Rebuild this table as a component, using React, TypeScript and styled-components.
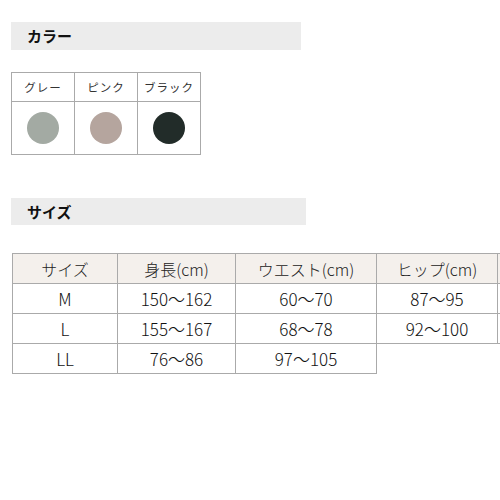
import React from "react";
import styled, { createGlobalStyle } from "styled-components";

const Global = createGlobalStyle`
  html, body { margin: 0; padding: 0; background: #fff; overflow: hidden; }
  body { font-family: "Noto Sans CJK JP", "Liberation Sans", sans-serif; color: #222; }
`;

const Page = styled.div`
  width: 500px;
  height: 500px;
  overflow: hidden;
  padding: 22px 0 0 11px;
  box-sizing: border-box;
`;

const SectionBar = styled.h2<{ $w: number }>`
  margin: 0;
  width: ${(p) => p.$w}px;
  height: 28px;
  background: #ececec;
  box-sizing: border-box;
  padding-left: 16px;
  font-size: 15px;
  font-weight: 700;
  line-height: 28px;
  color: #111;
`;

const ColorTable = styled.table`
  margin-top: 22px;
  border-collapse: collapse;
  table-layout: fixed;
`;

const ColorHead = styled.td`
  width: 62px;
  height: 28px;
  border: 1px solid #aaa;
  text-align: center;
  font-size: 11.5px;
  letter-spacing: 1px;
  color: #333;
  padding: 0;
`;

const SwatchCell = styled.td`
  height: 52px;
  border: 1px solid #aaa;
  padding: 0;
  text-align: center;
  vertical-align: middle;
`;

const Swatch = styled.span<{ $c: string }>`
  display: inline-block;
  width: 32px;
  height: 32px;
  border-radius: 50%;
  background: ${(p) => p.$c};
  vertical-align: middle;
`;

const SizeBar = styled(SectionBar)`
  margin-top: 43px;
  height: 27px;
  line-height: 27px;
`;

const SizeTable = styled.table`
  margin-top: 28px;
  margin-left: 1px;
  border-collapse: collapse;
  width: max-content;
`;

const Th = styled.th<{ $w: number }>`
  width: ${(p) => p.$w}px;
  min-width: ${(p) => p.$w}px;
  height: 29px;
  border: 1px solid #aaa;
  background: #f4f0ec;
  font-size: 16px;
  font-weight: 300;
  color: #222;
  padding: 0;
  text-align: center;
  white-space: nowrap;
`;

const Td = styled.td`
  height: 29px;
  border: 1px solid #aaa;
  font-size: 17px;
  font-weight: 300;
  color: #111;
  padding: 0;
  text-align: center;
  white-space: nowrap;
`;

const colors = [
  { name: "グレー", c: "#a3aaa3" },
  { name: "ピンク", c: "#b5a59e" },
  { name: "ブラック", c: "#222c29" },
];

const rows = [
  ["M", "150〜162", "60〜70", "87〜95", ""],
  ["L", "155〜167", "68〜78", "92〜100", ""],
  ["LL", "76〜86", "97〜105"],
];

export default function App() {
  return (
    <Page>
      <Global />
      <SectionBar $w={290}>カラー</SectionBar>
      <ColorTable>
        <tbody>
          <tr>
            {colors.map((c) => (
              <ColorHead key={c.name}>{c.name}</ColorHead>
            ))}
          </tr>
          <tr>
            {colors.map((c) => (
              <SwatchCell key={c.name}>
                <Swatch $c={c.c} />
              </SwatchCell>
            ))}
          </tr>
        </tbody>
      </ColorTable>
      <SizeBar $w={295}>サイズ</SizeBar>
      <SizeTable>
        <thead>
          <tr>
            <Th $w={104}>サイズ</Th>
            <Th $w={117}>身長(cm)</Th>
            <Th $w={140}>ウエスト(cm)</Th>
            <Th $w={120}>ヒップ(cm)</Th>
            <Th $w={110}></Th>
          </tr>
        </thead>
        <tbody>
          {rows.map((r) => (
            <tr key={r[0]}>
              {r.map((v, i) => (
                <Td key={i}>{v}</Td>
              ))}
            </tr>
          ))}
        </tbody>
      </SizeTable>
    </Page>
  );
}
